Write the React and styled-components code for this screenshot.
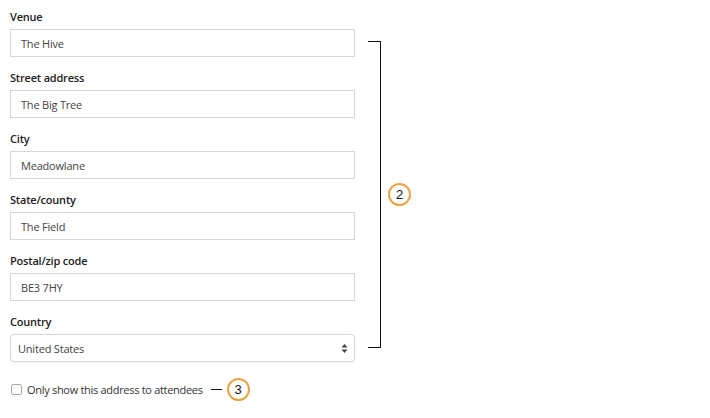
import React from 'react';
import styled, { createGlobalStyle } from 'styled-components';

const GlobalStyle = createGlobalStyle`
    body {
        margin: 0;
        background: #fff;
        font-family: "Open Sans", "Liberation Sans", sans-serif;
    }
`

const Page = styled.div`
    display: flex;
    align-items: flex-start;
    padding: 10px 0 0 10px;
`
const Form = styled.div`
    width: 345px;
    display: flex;
    flex-direction: column;
`
const Field = styled.div`
    display: flex;
    flex-direction: column;
    margin-bottom: 14px;
`
const Label = styled.label`
    font-size: 11px;
    font-weight: 600;
    color: #222;
    line-height: 14px;
    height: 14px;
    margin-bottom: 5px;
    letter-spacing: -0.2px;
`
const Input = styled.div`
    height: 26px;
    border: 1px solid #d6d6d6;
    border-radius: ${({ $rounded }) => ($rounded ? '4px' : '0')};
    display: flex;
    align-items: center;
    justify-content: space-between;
    padding: 0 6px 0 ${({ $rounded }) => ($rounded ? '7px' : '10px')};
    font-size: 11px;
    letter-spacing: -0.2px;
    color: #444;
    box-shadow: ${({ $rounded }) => ($rounded ? '0 1px 1px rgba(0,0,0,0.06)' : 'none')};
`
const CheckRow = styled.div`
    display: flex;
    align-items: center;
    margin-top: 2px;
    font-size: 11px;
    letter-spacing: -0.3px;
    color: #333;
`
const Box = styled.span`
    width: 9px;
    height: 9px;
    border: 1px solid #aaa;
    border-radius: 2px;
    margin: 0 5px 0 1px;
`
const Dash = styled.span`
    width: 11px;
    height: 1px;
    background: #111;
    margin: 0 5px 0 8px;
`
const Badge = styled.span`
    width: 19px;
    height: 19px;
    border: 2px solid #e7a445;
    border-radius: 50%;
    display: flex;
    align-items: center;
    justify-content: center;
    font-family: "Liberation Sans", Arial, sans-serif;
    font-size: 13px;
    letter-spacing: 0;
    color: #111;
`
const Annotation = styled.div`
    display: flex;
    align-items: center;
    margin: 31px 0 0 13px;
`
const Bracket = styled.div`
    width: 12px;
    height: 305px;
    border: 1px solid #111;
    border-left: none;
    margin-right: 7px;
`

const fields = [
    { label: 'Venue', value: 'The Hive' },
    { label: 'Street address', value: 'The Big Tree' },
    { label: 'City', value: 'Meadowlane' },
    { label: 'State/county', value: 'The Field' },
    { label: 'Postal/zip code', value: 'BE3 7HY' },
];

function Arrows() {
    return (
        <svg width="7" height="11" viewBox="0 0 7 11">
            <path d="M3.5 1 L6.5 4.5 L0.5 4.5 Z" fill="#444" />
            <path d="M3.5 10 L6.5 6.5 L0.5 6.5 Z" fill="#444" />
        </svg>
    );
}

export default function App() {
    return (
        <>
            <GlobalStyle />
            <Page>
                <Form>
                    {fields.map((f) => (
                        <Field key={f.label}>
                            <Label>{f.label}</Label>
                            <Input>{f.value}</Input>
                        </Field>
                    ))}
                    <Field>
                        <Label>Country</Label>
                        <Input $rounded>
                            United States
                            <Arrows />
                        </Input>
                    </Field>
                    <CheckRow>
                        <Box />
                        Only show this address to attendees
                        <Dash />
                        <Badge>3</Badge>
                    </CheckRow>
                </Form>
                <Annotation>
                    <Bracket />
                    <Badge>2</Badge>
                </Annotation>
            </Page>
        </>
    );
}
